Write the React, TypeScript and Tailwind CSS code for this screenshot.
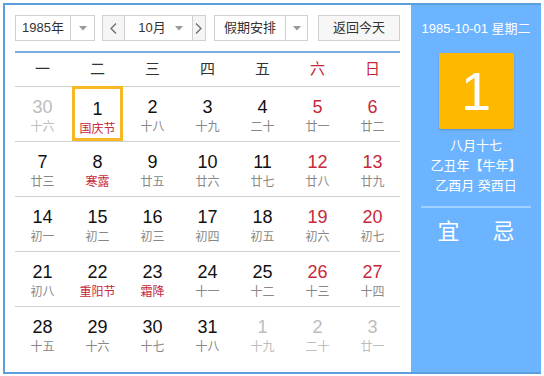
const days = [
  { d: 30, l: "十六", o: true },
  { d: 1, l: "国庆节", f: true, sel: true },
  { d: 2, l: "十八" },
  { d: 3, l: "十九" },
  { d: 4, l: "二十" },
  { d: 5, l: "廿一" },
  { d: 6, l: "廿二" },
  { d: 7, l: "廿三" },
  { d: 8, l: "寒露", f: true },
  { d: 9, l: "廿五" },
  { d: 10, l: "廿六" },
  { d: 11, l: "廿七" },
  { d: 12, l: "廿八" },
  { d: 13, l: "廿九" },
  { d: 14, l: "初一" },
  { d: 15, l: "初二" },
  { d: 16, l: "初三" },
  { d: 17, l: "初四" },
  { d: 18, l: "初五" },
  { d: 19, l: "初六" },
  { d: 20, l: "初七" },
  { d: 21, l: "初八" },
  { d: 22, l: "重阳节", f: true },
  { d: 23, l: "霜降", f: true },
  { d: 24, l: "十一" },
  { d: 25, l: "十二" },
  { d: 26, l: "十三" },
  { d: 27, l: "十四" },
  { d: 28, l: "十五" },
  { d: 29, l: "十六" },
  { d: 30, l: "十七" },
  { d: 31, l: "十八" },
  { d: 1, l: "十九", o: true },
  { d: 2, l: "二十", o: true },
  { d: 3, l: "廿一", o: true },
];

const weekdays = ["一", "二", "三", "四", "五", "六", "日"];

function Caret() {
  return (
    <svg width="8" height="5" viewBox="0 0 8 5">
      <path d="M0 0h8L4 4.5z" fill="#999" />
    </svg>
  );
}

export default function App() {
  const rows = [0, 1, 2, 3, 4].map((r) => days.slice(r * 7, r * 7 + 7));
  return (
    <div
      className="w-[544px] h-[376px] bg-white p-[3px]"
      style={{ fontFamily: '"Liberation Sans", "Noto Sans CJK SC", sans-serif' }}
    >
      <div className="flex h-[371px] border-2 border-[#5b9fdc] border-r-0">
        {/* left */}
        <div className="w-[406px] bg-white pl-[10px] pt-[10px]">
          <div className="flex h-[26px] items-stretch text-[13px] text-[#333]">
            <div className="flex w-[80px] border border-[#d0d0d0] bg-white">
              <div className="flex flex-1 items-center justify-center">1985年</div>
              <div className="flex w-[24px] items-center justify-center border-l border-[#d0d0d0]">
                <Caret />
              </div>
            </div>
            <div className="ml-[7px] flex w-[104px] border border-[#d0d0d0]">
              <div className="flex w-[22px] items-center justify-center border-r border-[#d0d0d0] bg-[#f5f5f5] text-[#666]">
                <svg width="7" height="11" viewBox="0 0 7 11">
                  <path d="M6 0.5L1 5.5l5 5" stroke="#666" fill="none" strokeWidth="1.2" />
                </svg>
              </div>
              <div className="flex flex-1 items-center justify-center gap-[9px] bg-white pl-[4px]">
                <span>10月</span>
                <Caret />
              </div>
              <div className="flex w-[13px] items-center justify-center border-l border-[#d0d0d0] bg-[#f5f5f5] pr-[1px]">
                <svg width="7" height="11" viewBox="0 0 7 11">
                  <path d="M1 0.5l5 5-5 5" stroke="#666" fill="none" strokeWidth="1.2" />
                </svg>
              </div>
            </div>
            <div className="ml-[8px] flex w-[94px] border border-[#d0d0d0] bg-white">
              <div className="flex flex-1 items-center justify-center">假期安排</div>
              <div className="flex w-[22px] items-center justify-center border-l border-[#d0d0d0]">
                <Caret />
              </div>
            </div>
            <div className="ml-[10px] flex w-[82px] items-center justify-center border border-[#d0d0d0] bg-[#f7f7f7]">
              返回今天
            </div>
          </div>
          <div className="mt-[10px] w-[385px] border-t-2 border-[#7aaedc]" />
          <div className="grid w-[385px] grid-cols-7 h-[33px] items-center text-[15px] text-[#333]">
            {weekdays.map((w, i) => (
              <div key={w} className={`text-center ${i >= 5 ? "text-[#c8283c]" : ""}`}>
                {w}
              </div>
            ))}
          </div>
          <div className="w-[385px]">
            {rows.map((row, ri) => (
              <div key={ri} className="grid h-[55px] grid-cols-7 border-t border-[#cfcfcf]">
                {row.map((c, ci) => {
                  const weekend = ci >= 5;
                  const numColor = c.o ? "text-[#bdbdbd]" : weekend ? "text-[#c8283c]" : "text-[#111]";
                  const lunColor = c.o ? "text-[#bdbdbd]" : c.f ? "text-[#c8283c]" : "text-[#888]";
                  return (
                    <div key={ci} className="flex justify-center">
                      <div
                        className={`flex w-[51px] flex-col items-center pt-[9px] ${
                          c.sel ? "-mt-px h-[55px] border-[3px] border-[#f8b825] pt-[7px]" : ""
                        }`}
                      >
                        <div className={`text-[18px] leading-[22px] ${numColor}`}>{c.d}</div>
                        <div className={`mt-[1px] text-[12px] leading-[16px] ${lunColor}`}>{c.l}</div>
                      </div>
                    </div>
                  );
                })}
              </div>
            ))}
          </div>
        </div>
        {/* right */}
        <div className="flex w-[130px] flex-col items-center bg-[#6cb4ff] text-white">
          <div className="mt-[16px] text-[13px] leading-[16px]">1985-10-01 星期二</div>
          <div className="mt-[16px] flex h-[76px] w-[75px] items-center justify-center rounded-[2px] bg-[#ffb800] shadow-[0_1px_2px_rgba(0,0,0,0.2)]">
            <span className="text-[54px] leading-none">1</span>
          </div>
          <div className="mt-[7px] text-[13px] leading-[20px]">八月十七</div>
          <div className="text-[13px] leading-[20px]">乙丑年【牛年】</div>
          <div className="text-[13px] leading-[20px]">乙酉月 癸酉日</div>
          <div className="mt-[10px] w-[110px] border-t-2 border-[#9fd0ff]" />
          <div className="mt-[10px] flex w-[110px] justify-around text-[22px] leading-[28px]">
            <span>宜</span>
            <span>忌</span>
          </div>
        </div>
      </div>
    </div>
  );
}
